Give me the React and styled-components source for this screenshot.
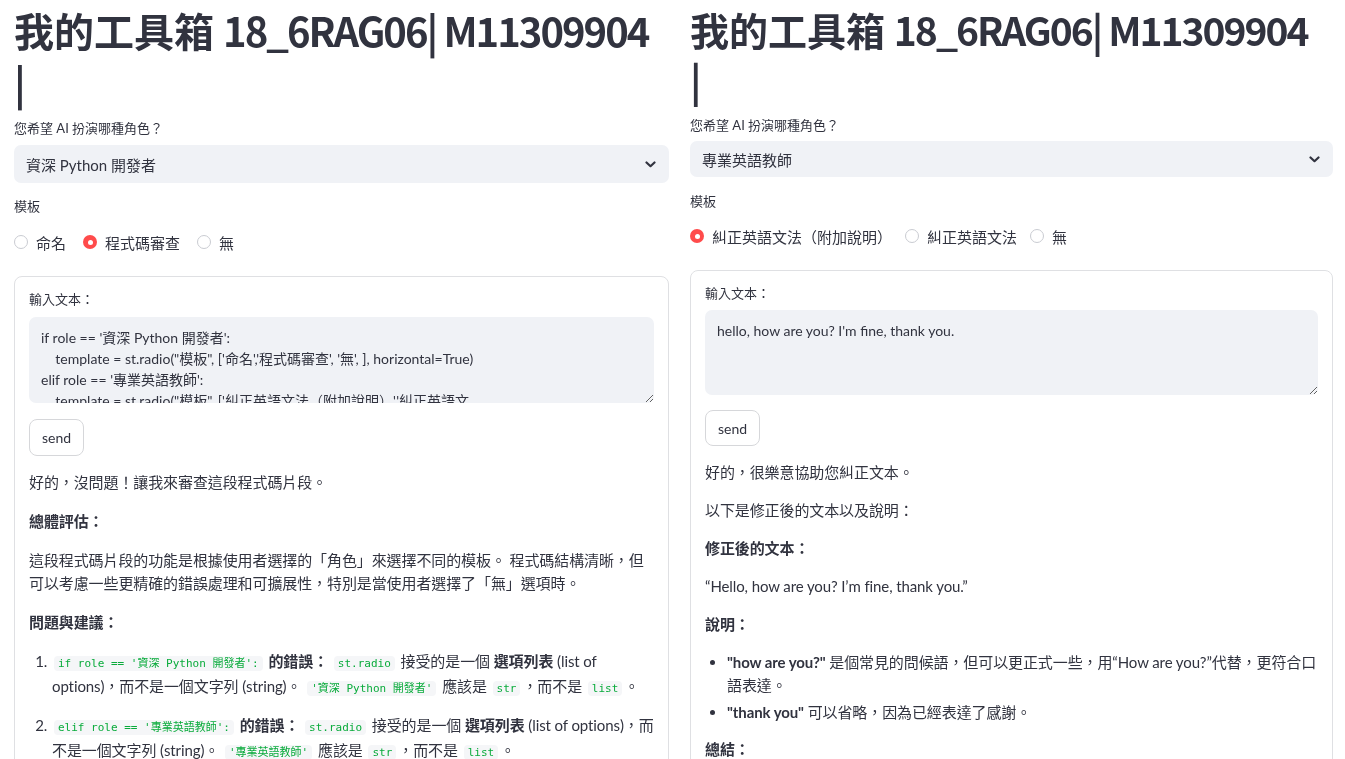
import React from "react";
import styled, { createGlobalStyle } from "styled-components";

const sans = `Lato, "Noto Sans CJK TC", "Noto Sans", sans-serif`;

const GlobalStyle = createGlobalStyle`
  html, body {
    margin: 0;
    padding: 0;
    height: 759px;
    overflow: hidden;
    background: #ffffff;
  }
  body {
    font-family: ${sans};
    color: #31333f;
  }
  * { box-sizing: border-box; }
`;

const Page = styled.div`
  display: flex;
  align-items: flex-start;
  width: 1345px;
  height: 759px;
  overflow: hidden;
`;

const Panel = styled.div`
  width: ${(p) => (p.$first ? "676px" : "669px")};
  padding: 4px ${(p) => (p.$first ? "7px" : "12px")} 0 14px;
  flex-shrink: 0;
`;

const Title = styled.h1`
  margin: 0;
  font-family: "Noto Sans CJK TC", "Noto Sans", sans-serif;
  font-size: ${(p) => (p.$compact ? "39px" : "40px")};
  font-weight: 700;
  line-height: ${(p) => (p.$compact ? "50px" : "52px")};
  color: #31333f;
  white-space: nowrap;
`;

const TitleLatin = styled.span`
  letter-spacing: -2px;
`;

const WidgetLabel = styled.div`
  font-size: 13px;
  line-height: 20px;
  color: #31333f;
  margin-top: ${(p) => p.$top}px;
`;

const Select = styled.div`
  display: flex;
  align-items: center;
  justify-content: space-between;
  height: ${(p) => (p.$compact ? "36px" : "38px")};
  margin-top: ${(p) => (p.$compact ? "6px" : "7px")};
  padding: 0 13px 0 12px;
  background: #f0f2f6;
  border-radius: 7px;
  font-size: 15px;
`;

const RadioGroup = styled.div`
  display: flex;
  align-items: center;
  gap: ${(p) => (p.$compact ? "13px" : "17px")};
  height: 24px;
  margin-top: ${(p) => (p.$compact ? "13px" : "14px")};
`;

const RadioOption = styled.label`
  display: flex;
  align-items: center;
  gap: 8px;
  font-size: 15px;
`;

const RadioDot = styled.span`
  display: inline-block;
  width: 14px;
  height: 14px;
  border-radius: 50%;
  background: ${(p) => (p.$checked ? "#ff4b4b" : "#ffffff")};
  border: ${(p) => (p.$checked ? "none" : "1px solid #c9cbd1")};
  position: relative;
  &::after {
    content: "";
    display: ${(p) => (p.$checked ? "block" : "none")};
    position: absolute;
    left: 4.5px;
    top: 4.5px;
    width: 5px;
    height: 5px;
    border-radius: 50%;
    background: #ffffff;
  }
`;

const Card = styled.div`
  margin-top: 22px;
  border: 1px solid #dfe0e3;
  border-radius: 8px;
  padding: 12px 14px 40px 14px;
`;

const TextArea = styled.textarea`
  display: block;
  width: 100%;
  height: ${(p) => (p.$compact ? "85px" : "86px")};
  margin-top: ${(p) => (p.$compact ? "7px" : "8px")};
  padding: 10px 12px;
  border: none;
  border-radius: 7px;
  background: #f0f2f6;
  color: #31333f;
  font-family: ${sans};
  font-size: 14px;
  line-height: 21px;
  resize: vertical;
  outline: none;
  scrollbar-width: none;
  white-space: pre-wrap;
`;

const SendButton = styled.button`
  display: block;
  margin-top: ${(p) => (p.$compact ? "15px" : "16px")};
  height: ${(p) => (p.$compact ? "36px" : "37px")};
  padding: 0 12px;
  background: #ffffff;
  border: 1px solid #d6d7da;
  border-radius: 8px;
  color: #31333f;
  font-family: ${sans};
  font-size: 14px;
`;

const Answer = styled.div`
  margin-top: 15px;
  font-size: 15px;
  line-height: 23px;
  letter-spacing: -0.1px;
  & p {
    margin: 0 0 ${(p) => (p.$compact ? "15px" : "16px")} 0;
  }
`;

const Para = styled.p``;

const Strong = styled.strong`
  font-weight: 700;
`;

const Code = styled.code`
  font-family: "DejaVu Sans Mono", "Liberation Mono", "Noto Sans CJK TC", monospace;
  font-size: 11px;
  letter-spacing: 0;
  color: #09ab3b;
  background: #f5f6f8;
  border-radius: 4px;
  padding: 1px 4px;
  margin: 0 2px;
`;

const OrderedList = styled.ol`
  margin: 0;
  padding-left: 22px;
  & > li {
    margin-bottom: 14px;
    padding-left: 1px;
  }
`;

const BulletList = styled.ul`
  margin: 0 0 14px 0;
  padding-left: 22px;
  & > li {
    margin-bottom: 4px;
  }
`;

const Chevron = () => (
  <svg width="11" height="7" viewBox="0 0 11 7" fill="none">
    <path d="M1.5 1.5 L5.5 5.2 L9.5 1.5" stroke="#31333f" strokeWidth="2.2" strokeLinecap="round" strokeLinejoin="round" />
  </svg>
);

const codeSample = `if role == '資深 Python 開發者':
    template = st.radio("模板", ['命名','程式碼審查', '無', ], horizontal=True)
elif role == '專業英語教師':
    template = st.radio("模板", ['糾正英語文法（附加說明）','糾正英語文
法', '無', ], horizontal=True)`;

function Header({ compact, role, options, checked }) {
  return (
    <>
      <Title $compact={compact}>
        我的工具箱 <TitleLatin>18_6RAG06| M11309904</TitleLatin>
        <br />|
      </Title>
      <WidgetLabel $top={compact ? 11 : 10}>您希望 AI 扮演哪種角色？</WidgetLabel>
      <Select $compact={compact}>
        <span>{role}</span>
        <Chevron />
      </Select>
      <WidgetLabel $top={compact ? 14 : 13}>模板</WidgetLabel>
      <RadioGroup $compact={compact}>
        {options.map((o, i) => (
          <RadioOption key={o}>
            <RadioDot $checked={i === checked} />
            {o}
          </RadioOption>
        ))}
      </RadioGroup>
    </>
  );
}

export default function App() {
  return (
    <Page>
      <GlobalStyle />
      <Panel $first>
        <Header role="資深 Python 開發者" options={["命名", "程式碼審查", "無"]} checked={1} />
        <Card>
          <WidgetLabel $top={0}>輸入文本：</WidgetLabel>
          <TextArea readOnly defaultValue={codeSample} />
          <SendButton>send</SendButton>
          <Answer>
            <Para>好的，沒問題！讓我來審查這段程式碼片段。</Para>
            <Para><Strong>總體評估：</Strong></Para>
            <Para>
              這段程式碼片段的功能是根據使用者選擇的「角色」來選擇不同的模板。 程式碼結構清晰，但可以考慮一些更精確的錯誤處理和可擴展性，特別是當使用者選擇了「無」選項時。
            </Para>
            <Para><Strong>問題與建議：</Strong></Para>
            <OrderedList>
              <li>
                <Code>if role == '資深 Python 開發者':</Code> <Strong>的錯誤：</Strong> <Code>st.radio</Code> 接受的是一個 <Strong>選項列表</Strong> (list of options)，而不是一個文字列 (string)。 <Code>'資深 Python 開發者'</Code> 應該是 <Code>str</Code>，而不是 <Code>list</Code>。
              </li>
              <li>
                <Code>elif role == '專業英語教師':</Code> <Strong>的錯誤：</Strong> <Code>st.radio</Code> 接受的是一個 <Strong>選項列表</Strong> (list of options)，而不是一個文字列 (string)。 <Code>'專業英語教師'</Code> 應該是 <Code>str</Code>，而不是 <Code>list</Code>。
              </li>
            </OrderedList>
          </Answer>
        </Card>
      </Panel>
      <Panel>
        <Header compact role="專業英語教師" options={["糾正英語文法（附加說明）", "糾正英語文法", "無"]} checked={0} />
        <Card>
          <WidgetLabel $top={0}>輸入文本：</WidgetLabel>
          <TextArea $compact readOnly defaultValue="hello, how are you? I'm fine, thank you." />
          <SendButton $compact>send</SendButton>
          <Answer $compact>
            <Para>好的，很樂意協助您糾正文本。</Para>
            <Para>以下是修正後的文本以及說明：</Para>
            <Para><Strong>修正後的文本：</Strong></Para>
            <Para>“Hello, how are you? I’m fine, thank you.”</Para>
            <Para><Strong>說明：</Strong></Para>
            <BulletList>
              <li>
                <Strong>"how are you?"</Strong> 是個常見的問候語，但可以更正式一些，用“How are you?”代替，更符合口語表達。
              </li>
              <li>
                <Strong>"thank you"</Strong> 可以省略，因為已經表達了感謝。
              </li>
            </BulletList>
            <Para><Strong>總結：</Strong></Para>
          </Answer>
        </Card>
      </Panel>
    </Page>
  );
}
